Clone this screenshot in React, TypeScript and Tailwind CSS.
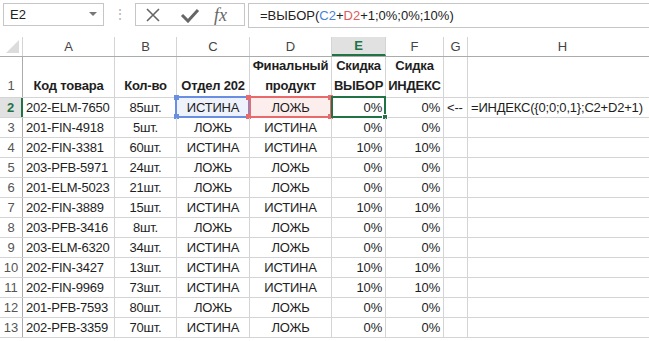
import { ReactNode } from "react";

type Row = [string, string, string, string, string, string];

const rows: Row[] = [
  ["202-ELM-7650", "85шт.", "ИСТИНА", "ЛОЖЬ", "0%", "0%"],
  ["201-FIN-4918", "5шт.", "ЛОЖЬ", "ИСТИНА", "0%", "0%"],
  ["202-FIN-3381", "60шт.", "ИСТИНА", "ИСТИНА", "10%", "10%"],
  ["203-PFB-5971", "24шт.", "ЛОЖЬ", "ЛОЖЬ", "0%", "0%"],
  ["201-ELM-5023", "21шт.", "ЛОЖЬ", "ЛОЖЬ", "0%", "0%"],
  ["202-FIN-3889", "15шт.", "ИСТИНА", "ИСТИНА", "10%", "10%"],
  ["203-PFB-3416", "8шт.", "ЛОЖЬ", "ЛОЖЬ", "0%", "0%"],
  ["203-ELM-6320", "34шт.", "ИСТИНА", "ЛОЖЬ", "0%", "0%"],
  ["202-FIN-3427", "13шт.", "ИСТИНА", "ИСТИНА", "10%", "10%"],
  ["202-FIN-9969", "73шт.", "ИСТИНА", "ИСТИНА", "10%", "10%"],
  ["201-PFB-7593", "80шт.", "ЛОЖЬ", "ЛОЖЬ", "0%", "0%"],
  ["202-PFB-3359", "70шт.", "ИСТИНА", "ЛОЖЬ", "0%", "0%"],
];

const widths = ["w-[92px]", "w-[62px]", "w-[73px]", "w-[82px]", "w-[54px]", "w-[58px]", "w-[24px]", "w-[190px]"];
const letters = ["A", "B", "C", "D", "E", "F", "G", "H"];

const Cell = ({ w, className = "", children }: { w: string; className?: string; children?: ReactNode }) => (
  <div className={`${w} relative h-full shrink-0 border-r border-[#d4d4d4] px-[3px] flex items-center whitespace-nowrap ${className}`}>
    {children}
  </div>
);

const Handle = ({ className }: { className: string }) => (
  <span className={`absolute w-[5px] h-[5px] ${className}`} />
);

const Toolbar = () => (
  <div className="h-[37px] flex items-start pt-[3px] pl-[3px] text-[13px] tracking-normal">
    <div className="w-[101px] h-[23px] border border-[#c6c6c6] flex items-center pl-[6px] pr-[6px] text-[#222]">
      <span className="flex-1">E2</span>
      <svg width="8" height="5" viewBox="0 0 8 5">
        <polygon points="0,0 8,0 4,4" fill="#777" />
      </svg>
    </div>
    <div className="w-[31px] h-[23px] flex items-center justify-center text-[#b5b5b5] text-[14px]">⋮</div>
    <div className="w-[110px] h-[23px] border border-[#c6c6c6] flex items-center">
      <svg width="16" height="16" viewBox="0 0 16 16" className="ml-[9px]">
        <path d="M2 2 L14 14 M14 2 L2 14" stroke="#666" strokeWidth="1.6" />
      </svg>
      <svg width="20" height="16" viewBox="0 0 20 16" className="ml-[19px]">
        <path d="M2 8 L8 14 L18 3" stroke="#666" strokeWidth="3" fill="none" />
      </svg>
      <span className="ml-[14px] text-[#666] text-[18px] italic font-['Liberation_Serif',serif] leading-none">fx</span>
    </div>
    <div className="ml-[3px] flex-1 h-[25px] border border-r-0 border-[#c6c6c6] flex items-center pl-[11px] text-[#222]">
      =ВЫБОР(<span className="text-[#4a7fd8]">C2</span>+<span className="text-[#e05a5a]">D2</span>+1;0%;0%;10%)
    </div>
  </div>
);

export default function App() {
  return (
    <div className="w-[649px] h-[341px] overflow-hidden bg-white font-['Liberation_Sans',sans-serif] text-[13px] tracking-[-0.2px] text-[#1e1e1e]">
      <Toolbar />
      {/* column header */}
      <div className="flex h-[20px] border-b border-[#ababab] tracking-normal">
        <div className="w-[23px] shrink-0 h-full border-r border-[#d4d4d4] flex items-end justify-end pr-[3px] pb-[3px]">
          <svg width="13" height="13" viewBox="0 0 13 13">
            <polygon points="13,0 13,13 0,13" fill="#dcdcdc" />
          </svg>
        </div>
        {letters.map((l, i) => (
          <div
            key={l}
            className={`${widths[i]} shrink-0 h-full border-r border-[#d4d4d4] flex items-center justify-center ${
              l === "E" ? "bg-[#e1e1e1] text-[#217346] font-bold border-b-2 border-b-[#217346]" : "text-[#444]"
            }`}
          >
            {l}
          </div>
        ))}
      </div>
      {/* row 1 headers */}
      <div className="flex h-[41px] border-b border-[#d4d4d4] font-bold leading-[20px]">
        <div className="w-[23px] shrink-0 h-full border-r border-[#ababab] flex items-end justify-center pb-[1px] font-normal text-[#555]">1</div>
        <Cell w={widths[0]} className="items-end justify-center pb-[1px]">Код товара</Cell>
        <Cell w={widths[1]} className="items-end justify-center pb-[1px]">Кол-во</Cell>
        <Cell w={widths[2]} className="items-end justify-center pb-[1px] px-[1px]">Отдел 202</Cell>
        <Cell w={widths[3]} className="items-end justify-center text-center pb-[1px] px-[1px]">
          <span>Финальный<br />продукт</span>
        </Cell>
        <Cell w={widths[4]} className="items-end justify-center text-center pb-[1px] px-[1px]">
          <span>Скидка<br />ВЫБОР</span>
        </Cell>
        <Cell w={widths[5]} className="items-end justify-center text-center pb-[1px] px-[1px]">
          <span>Сидка<br />ИНДЕКС</span>
        </Cell>
        <Cell w={widths[6]} />
        <Cell w={widths[7]} />
      </div>
      {rows.map((r, i) => {
        const n = i + 2;
        const sel = n === 2;
        return (
          <div key={n} className="flex h-[20px] border-b border-[#d4d4d4]">
            <div
              className={`w-[23px] shrink-0 h-full border-r flex items-center justify-center tracking-normal ${
                sel ? "border-r-2 border-[#217346] text-[#217346] font-bold bg-[#e1e1e1]" : "border-[#ababab] text-[#555]"
              }`}
            >
              {n}
            </div>
            <Cell w={widths[0]}>{r[0]}</Cell>
            <Cell w={widths[1]} className="justify-center">{r[1]}</Cell>
            <Cell w={widths[2]} className={`justify-center ${sel ? "bg-[#eef2fc]" : ""}`}>
              {r[2]}
              {sel && (
                <div className="absolute -left-[2px] -top-[2px] -right-[1px] -bottom-[1px] border-2 border-[#6a8fe0]">
                  <Handle className="-left-[3px] -top-[3px] bg-[#6a8fe0]" />
                  <Handle className="-right-[3px] -top-[3px] bg-[#e86a6a]" />
                  <Handle className="-left-[3px] -bottom-[3px] bg-[#6a8fe0]" />
                  <Handle className="-right-[3px] -bottom-[3px] bg-[#e86a6a]" />
                </div>
              )}
            </Cell>
            <Cell w={widths[3]} className={`justify-center ${sel ? "bg-[#fdeeee]" : ""}`}>
              {r[3]}
              {sel && (
                <div className="absolute -left-[1px] -top-[2px] -right-[1px] -bottom-[1px] border-2 border-[#e86a6a]">
                  <Handle className="-right-[3px] -top-[3px] bg-[#e86a6a]" />
                  <Handle className="-right-[3px] -bottom-[3px] bg-[#e86a6a]" />
                </div>
              )}
            </Cell>
            <Cell w={widths[4]} className="justify-end">
              {r[4]}
              {sel && (
                <div className="absolute -left-[1px] -top-[2px] -right-[1px] -bottom-[1px] border-2 border-[#217346]">
                  <span className="absolute -right-[4px] -bottom-[4px] w-[6px] h-[6px] bg-[#217346] border border-white" />
                </div>
              )}
            </Cell>
            <Cell w={widths[5]} className="justify-end">{r[5]}</Cell>
            <Cell w={widths[6]} className="px-[2px]">{sel ? "<--" : ""}</Cell>
            <Cell w={widths[7]} className="px-[3px]">
              {sel ? "=ИНДЕКС({0;0;0,1};C2+D2+1)" : ""}
            </Cell>
          </div>
        );
      })}
    </div>
  );
}
